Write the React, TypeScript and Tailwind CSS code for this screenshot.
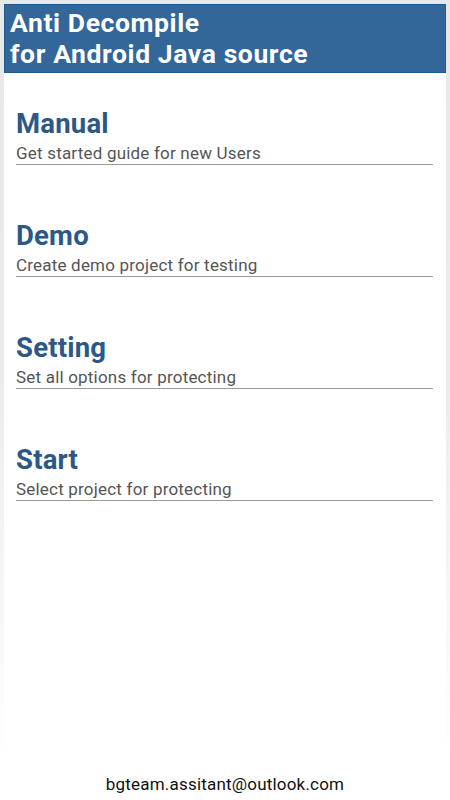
const items = [
  { title: 'Manual', desc: 'Get started guide for new Users' },
  { title: 'Demo', desc: 'Create demo project for testing' },
  { title: 'Setting', desc: 'Set all options for protecting' },
  { title: 'Start', desc: 'Select project for protecting' },
];

export default function App() {
  return (
    <div
      className="flex h-[800px] w-full flex-col bg-white"
      style={{ fontFamily: 'Roboto, "Liberation Sans", sans-serif' }}
    >
      <div className="flex h-[765px] flex-col bg-gradient-to-b from-[#e8e8e8] via-[#ececec] to-white px-[4px] pt-[4px]">
        <div className="flex flex-1 flex-col bg-white">
          <div className="h-[69px] border border-[#1d5b92] bg-[#336699] pl-[5px] pt-[2px]">
            <h1 className="text-[26.5px] font-bold leading-[31px] tracking-[0.6px] text-white">
              Anti Decompile
              <br />
              for Android Java source
            </h1>
          </div>
          <div className="flex flex-col gap-[53px] pl-[12px] pr-[13px] pt-[33px]">
            {items.map((it) => (
              <div key={it.title} className="border-b border-[#9a9a9a]">
                <div className="text-[27.5px] font-bold leading-[36px] tracking-[0.2px] text-[#2b5886]">
                  {it.title}
                </div>
                <div className="text-[17px] leading-[22px] tracking-[0.2px] text-[#555555]">{it.desc}</div>
              </div>
            ))}
          </div>
        </div>
      </div>
      <div className="flex flex-1 justify-center pt-[9px] text-[17px] leading-[20px] tracking-[0.2px] text-[#111111]">
        bgteam.assitant@outlook.com
      </div>
    </div>
  );
}
